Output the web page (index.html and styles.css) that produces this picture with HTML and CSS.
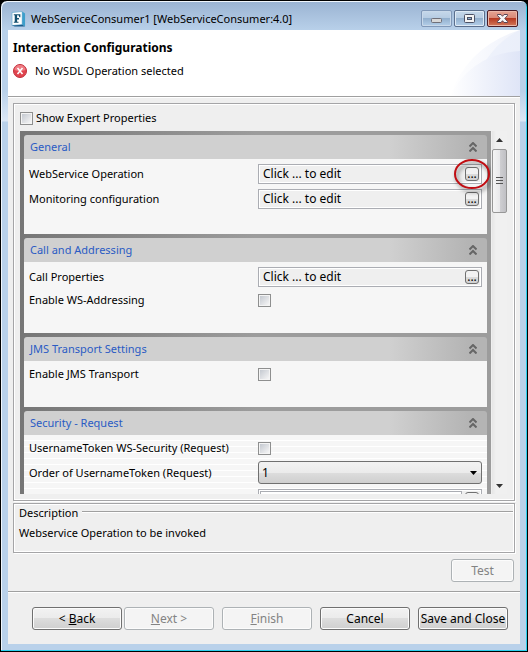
FILE: index.html
```html
<!DOCTYPE html>
<html lang="en">
<head>
<meta charset="utf-8">
<title>WebServiceConsumer1</title>
<link rel="stylesheet" href="styles.css">
</head>
<body>
<div class="window">
  <header class="titlebar">
    <svg class="app-icon" viewBox="0 0 16 16" aria-hidden="true">
      <path d="M1 1 L12 0 L12 14 L1 15Z" fill="#fff" stroke="#7db4d3"/>
      <path d="M12 0 L15 2 L15 16 L12 14Z" fill="#3d9fcb"/>
      <path d="M1 15 L12 14 L15 16 L4 16Z" fill="#1b5d8c"/>
      <path d="M3 3H10V6H9L8 4H6.500V7H8.500V8.500H6.500V11H8V12H3V11H4V4H3Z" fill="#14506f"/>
    </svg>
    <h1 class="title">WebServiceConsumer1 [WebServiceConsumer:4.0]</h1>
    <div class="controls">
      <button class="control control-min" aria-label="Minimize"><svg viewBox="0 0 31 17"><rect x="10.500" y="8.500" width="10" height="4" rx="1" fill="#d8d8d8" stroke="#6f6f78"/></svg></button>
      <button class="control" aria-label="Maximize"><svg viewBox="0 0 31 17"><rect x="10.500" y="4.500" width="10" height="8" rx="1" fill="#f4f4f4" stroke="#4c5165"/><rect x="13.500" y="7.500" width="4" height="2" fill="#8fb0d0" stroke="#4c5165"/></svg></button>
      <button class="control control-close" aria-label="Close"><svg viewBox="0 0 31 17"><path d="M10.500 4.500H14L15.500 6.300L17 4.500H20.500V5.500L17.800 8.500L20.500 11.500V12.500H17L15.500 10.700L14 12.500H10.500V11.500L13.200 8.500L10.500 5.500Z" fill="#f6f6f6" stroke="#5a4655"/></svg></button>
    </div>
  </header>
  <main class="content">
    <section class="banner">
      <div class="banner-text">
        <h2>Interaction Configurations</h2>
        <p class="message">
          <svg class="error-icon" viewBox="0 0 14 14" aria-hidden="true"><circle cx="7" cy="7" r="6.500" fill="#e0444e" stroke="#c2303c"/><path d="M1.500 6a5.500 5 0 0 1 11 0q-5.500 2-11 0" fill="#ee7d84"/><path d="M4.500 4L9.500 10M9.500 4L4.500 10" stroke="#fff" stroke-width="1.600"/></svg>
          No WSDL Operation selected
        </p>
      </div>
      <svg class="swoosh" viewBox="0 0 74 66" aria-hidden="true">
        <defs><linearGradient id="fade"><stop offset="0" stop-color="#fff"/><stop offset="1" stop-color="#dfe5f7"/></linearGradient>
        <linearGradient id="fade2"><stop offset="0" stop-color="#fff"/><stop offset="1" stop-color="#eff2fb"/></linearGradient></defs>
        <path d="M4 66Q22 16 74 0V66Z" fill="url(#fade2)"/>
        <path d="M24 66Q38 18 74 0V66Z" fill="#e6ebfa" opacity=".5"/>
        <path d="M4 66Q26 24 74 21V66Z" fill="url(#fade)"/>
      </svg>
    </section>
    <section class="group properties">
      <label class="expert"><input type="checkbox" class="check">Show Expert Properties</label>
      <div class="scroller">
        <div class="sections">
          <section class="panel">
            <button class="panel-head">General<svg class="chevrons" viewBox="0 0 8 10"><path d="M.5 4.500L4 1L7.500 4.500M.5 9.500L4 6L7.500 9.500"/></svg></button>
            <div class="panel-body">
              <div class="row"><span>WebService Operation</span><div class="field">Click ... to edit<span class="marked"><button class="more" aria-label="Edit WebService Operation">...</button><svg class="ring" viewBox="0 0 44 40"><ellipse cx="20" cy="18" rx="17" ry="14"/></svg></span></div></div>
              <div class="row"><span>Monitoring configuration</span><div class="field">Click ... to edit<button class="more" aria-label="Edit Monitoring configuration">...</button></div></div>
            </div>
          </section>
          <section class="panel">
            <button class="panel-head">Call and Addressing<svg class="chevrons" viewBox="0 0 8 10"><path d="M.5 4.500L4 1L7.500 4.500M.5 9.500L4 6L7.500 9.500"/></svg></button>
            <div class="panel-body">
              <div class="row"><span>Call Properties</span><div class="field">Click ... to edit<button class="more" aria-label="Edit Call Properties">...</button></div></div>
              <div class="row"><label for="addressing">Enable WS-Addressing</label><input type="checkbox" class="check" id="addressing"></div>
            </div>
          </section>
          <section class="panel">
            <button class="panel-head">JMS Transport Settings<svg class="chevrons" viewBox="0 0 8 10"><path d="M.5 4.500L4 1L7.500 4.500M.5 9.500L4 6L7.500 9.500"/></svg></button>
            <div class="panel-body">
              <div class="row"><label for="jms">Enable JMS Transport</label><input type="checkbox" class="check" id="jms"></div>
            </div>
          </section>
          <section class="panel">
            <button class="panel-head">Security - Request<svg class="chevrons" viewBox="0 0 8 10"><path d="M.5 4.500L4 1L7.500 4.500M.5 9.500L4 6L7.500 9.500"/></svg></button>
            <div class="panel-body striped">
              <div class="row"><label for="token">UsernameToken WS-Security (Request)</label><input type="checkbox" class="check" id="token"></div>
              <div class="row"><label for="order">Order of UsernameToken (Request)</label><div class="select-wrap"><select id="order" class="select"><option>1</option></select><svg class="caret" viewBox="0 0 7 4"><path d="M0 0H7L3.500 4Z"/></svg></div></div>
              <div class="row"><span></span><div class="field field-inset"><span class="field-inner"></span><button class="more" aria-label="Edit"></button></div></div>
            </div>
          </section>
        </div>
        <div class="scrollbar">
          <svg class="arrow" viewBox="0 0 15 18"><path d="M4 11L7.500 7L11 11Z"/></svg>
          <div class="thumb"><svg viewBox="0 0 7 8"><path d="M0 .5H7M0 3.500H7M0 6.500H7" stroke="#555"/></svg></div>
          <svg class="arrow arrow-down" viewBox="0 0 15 18"><path d="M4 8L7.500 12L11 8Z"/></svg>
        </div>
      </div>
    </section>
    <section class="group description">
      <h3>Description</h3>
      <p>Webservice Operation to be invoked</p>
    </section>
    <div class="test-bar"><button class="button button-small" disabled>Test</button></div>
    <footer class="actions">
      <div class="pair">
        <button class="button"><span>&lt; <u>B</u>ack</span></button>
        <button class="button" disabled><span><u>N</u>ext &gt;</span></button>
      </div>
      <button class="button" disabled><span><u>F</u>inish</span></button>
      <button class="button">Cancel</button>
      <button class="button">Save and Close</button>
    </footer>
  </main>
</div>
</body>
</html>
```
FILE: styles.css
```css
*, *::after { box-sizing: border-box; }
body {
  margin: 0;
  background: #000;
  font: 11px/16px "Noto Sans", "Open Sans", sans-serif;
  color: #000;
}
h1, h2, h3, p { margin: 0; font-size: inherit; font-weight: normal; }
button, select { font: inherit; color: inherit; }
button svg { display: block; }
.window {
  height: 100vh;
  display: flex;
  flex-direction: column;
  border: 1px solid #000;
  border-radius: 7px 7px 0 0;
  padding: 0 7px 7px;
  background: linear-gradient(#9ab3d2, #b9d1ea 30px, #b9d1ea 90px, #dbe7f5 120px, #b9d1ea 121px);
  box-shadow: inset -1px -1px #2bd0ee, inset 1px 1px #f0f6fc;
}
.titlebar {
  flex: none;
  height: 29px;
  display: flex;
  align-items: center;
  gap: 5px;
  padding: 6px 2px 0 3px;
}
.app-icon { width: 15px; height: 16px; }
.title { flex: 1; white-space: nowrap; }
.controls { display: flex; gap: 2px; }
.control {
  width: 31px;
  height: 17px;
  padding: 0;
  border: 1px solid #5b6f8d;
  border-radius: 2px;
  background: linear-gradient(#c6d8ea, #b5cbe2 50%, #93b0ce 50%, #b4cfe9);
  box-shadow: inset 0 0 0 1px #dfeaf5;
}
.control svg { margin: -1px; width: 31px; height: 17px; }
.control-min { border-color: #8098b8; box-shadow: inset 0 0 0 1px #c9d9ea; }
.control-close {
  border-color: #4b1c26;
  background: linear-gradient(#e5a493, #d88674 50%, #b63a22 50%, #d3795b);
  box-shadow: inset 0 0 0 1px #eab7a8;
}
.content {
  flex: 1;
  min-height: 0;
  display: flex;
  flex-direction: column;
  background: #efefef;
}
.banner {
  flex: none;
  height: 68px;
  display: flex;
  justify-content: space-between;
  background: #fff;
  border-bottom: 1px solid #fff;
  box-shadow: inset 0 -1px #a0a0a0;
}
.banner-text { padding: 10px 5px; }
.banner h2 { font-size: 12px; font-weight: bold; }
.message { display: flex; align-items: center; gap: 8px; margin-top: 7px; }
.error-icon { width: 14px; height: 14px; }
.swoosh { width: 74px; height: 66px; }
.group {
  margin: 5px 5px 0;
  border: 1px solid #a5a5a7;
  box-shadow: inset 0 0 0 1px #fff, 1px 1px #fff;
}
.properties {
  flex: 1;
  min-height: 0;
  display: flex;
  flex-direction: column;
  padding: 6px 7px 6px 6px;
}
.expert { display: flex; align-items: center; gap: 3px; margin-bottom: 5px; }
.check {
  appearance: none;
  width: 13px;
  height: 13px;
  margin: 0;
  border: 1px solid #8e8f8f;
  background: linear-gradient(135deg, #c4c9d0, #f6f6f6) content-box, #f4f4f4;
  padding: 1px;
  box-shadow: inset 0 0 0 1px #f4f4f4;
}
.scroller { flex: 1; min-height: 0; display: flex; gap: 1px; }
.sections {
  flex: 1;
  overflow: hidden;
  display: flex;
  flex-direction: column;
  gap: 4px;
  padding: 4px;
  background: linear-gradient(90deg, #767676, #9c9c9c 50%);
}
.panel { flex: none; }
.panel-head {
  width: 100%;
  height: 24px;
  display: flex;
  align-items: center;
  justify-content: space-between;
  padding: 0 10px 0 6px;
  border: 0;
  border-radius: 3px 3px 0 0;
  background: linear-gradient(90deg, #d0d0d0 79%, #b4b4b4 96%);
  color: #2a5bc4;
}
.chevrons { width: 8px; height: 10px; fill: none; stroke: #666; stroke-width: 2; }
.panel-body {
  display: flex;
  flex-direction: column;
  gap: 5px;
  padding: 5px 5px 25px;
  background: #f6f6f6;
}
.striped { background: repeating-linear-gradient(#f6f6f6 0 5px, #fff 5px 6px); }
.row {
  display: grid;
  grid-template-columns: 229px 1fr;
  align-items: center;
  min-height: 16px;
}
.field {
  height: 20px;
  display: flex;
  align-items: center;
  justify-content: space-between;
  padding: 0 2px 0 4px;
  border: 1px solid #abadb3;
  background: #efefef;
  box-shadow: inset 0 0 0 1px #fff;
  font-size: 12px;
}
.field-inset { gap: 3px; padding-left: 1px; }
.field-inner { flex: 1; height: 16px; border: 1px solid #abadb3; background: #fff; }
.more {
  display: block;
  width: 14px;
  height: 14px;
  padding: 0;
  border: 1px solid #707070;
  border-radius: 3px;
  background: linear-gradient(#f2f2f2 50%, #dcdcdc 50%, #d0d0d0);
  line-height: 12px;
}
.marked { position: relative; }
.ring {
  position: absolute;
  left: -13px;
  top: -11px;
  width: 44px;
  height: 40px;
  fill: none;
  stroke: #c00d12;
  stroke-width: 2;
  filter: drop-shadow(2px 3px 2px #0008);
  pointer-events: none;
}
.select-wrap { position: relative; display: grid; }
.select {
  appearance: none;
  height: 23px;
  padding: 0 3px;
  border: 1px solid #707070;
  border-radius: 3px;
  background: linear-gradient(#f2f2f2, #ebebeb 50%, #dddddd 50%, #cfcfcf);
  font-size: 12px;
}
.caret {
  position: absolute;
  right: 5px;
  top: 10px;
  width: 7px;
  height: 4px;
  pointer-events: none;
}
.scrollbar {
  width: 15px;
  display: flex;
  flex-direction: column;
  background: linear-gradient(90deg, #e6e6e6, #f0f0f0 4px);
}
.arrow { width: 15px; height: 18px; fill: #333; }
.arrow-down { margin-top: auto; }
.thumb {
  height: 64px;
  display: grid;
  place-items: center;
  border: 1px solid #979797;
  border-radius: 2px;
  background: linear-gradient(90deg, #f5f5f5, #e9e9eb 50%, #d0d0d3 50%, #c0c0c4);
}
.thumb svg { width: 7px; height: 8px; }
.description { flex: none; height: 50px; margin-top: 2px; padding: 1px 1px 0 5px; }
.description h3 { display: flex; align-items: center; gap: 4px; }
.description h3::after {
  content: "";
  flex: 1;
  height: 2px;
  margin-bottom: 3px;
  background: #a0a0a0;
  border-bottom: 1px solid #fff;
}
.description p { margin-top: 4px; }
.test-bar {
  flex: none;
  display: flex;
  justify-content: flex-end;
  padding: 6px 6px 9px;
  border-bottom: 1px solid #a0a0a0;
}
.button {
  width: 90px;
  height: 23px;
  padding: 0;
  border: 1px solid #707070;
  border-radius: 3px;
  background: linear-gradient(#f2f2f2, #ebebeb 50%, #dddddd 50%, #cfcfcf);
  box-shadow: inset 0 0 0 1px #fcfcfc;
  font-size: 12px;
  white-space: nowrap;
}
.button:disabled { border-color: #adb2b5; background: #f4f4f4; color: #838383; }
.button-small { width: 63px; }
.actions {
  flex: none;
  display: flex;
  justify-content: flex-end;
  gap: 8px;
  padding: 14px 12px;
  border-top: 1px solid #fff;
}
.pair { display: flex; gap: 2px; }
```
